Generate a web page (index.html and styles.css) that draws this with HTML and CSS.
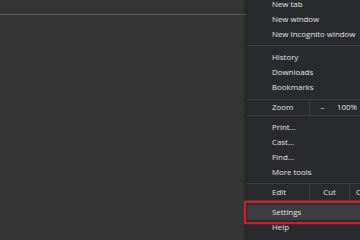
FILE: index.html
```html
<!DOCTYPE html>
<html>
<head>
<meta charset="utf-8">
<link rel="stylesheet" href="styles.css">
</head>
<body>
<div class="page">
  <div class="toolbar-line"></div>
  <div class="menu">
    <div class="item">New tab</div>
    <div class="item">New window</div>
    <div class="item">New Incognito window</div>
    <div class="sep sep-a"></div>
    <div class="item">History</div>
    <div class="item">Downloads</div>
    <div class="item">Bookmarks</div>
    <div class="sep sep-b"></div>
    <div class="row">
      <div class="row-label">Zoom</div>
      <div class="cell cell-minus">–</div>
      <div class="cell cell-pct">100%</div>
    </div>
    <div class="sep sep-c"></div>
    <div class="item">Print...</div>
    <div class="item">Cast...</div>
    <div class="item">Find...</div>
    <div class="item">More tools</div>
    <div class="sep sep-d"></div>
    <div class="row row-edit">
      <div class="row-label">Edit</div>
      <div class="cell cell-cut">Cut</div>
      <div class="cell cell-copy">Copy</div>
    </div>
    <div class="sep sep-e"></div>
    <div class="item item-settings">Settings</div>
    <div class="item">Help</div>
  </div>
</div>
</body>
</html>
```

FILE: styles.css
```css
html, body {
  margin: 0;
  padding: 0;
  width: 360px;
  height: 240px;
  overflow: hidden;
  background: #353535;
}

.page {
  position: relative;
  width: 360px;
  height: 240px;
  padding-top: 14px;
  box-sizing: border-box;
  overflow: hidden;
  font-family: "Open Sans", "Noto Sans", sans-serif;
  font-size: 7.9px;
  color: #e4e5e7;
}

.toolbar-line {
  height: 1px;
  width: 247px;
  background: #5f5f5f;
}

.menu {
  position: absolute;
  top: -4px;
  left: 247px;
  width: 140px;
  height: 260px;
  padding-top: 1px;
  background: #292a2d;
  box-shadow: -2px 0 3px rgba(0, 0, 0, 0.35);
  display: flex;
  flex-direction: column;
}

.item {
  height: 15px;
  line-height: 15px;
  padding-left: 25px;
  white-space: nowrap;
  flex-shrink: 0;
}

.sep {
  height: 1px;
  background: #3d3e42;
  flex-shrink: 0;
}
.sep-a { margin: 3px 0 4px; }
.sep-b { margin: 4px 0 0; }
.sep-c { margin: 0 0 4px; }
.sep-d { margin: 3px 0 0; }
.sep-e { margin: 0 0 4px; }

.row {
  display: flex;
  height: 15px;
  line-height: 15px;
  white-space: nowrap;
  flex-shrink: 0;
}
.row-edit { height: 16px; line-height: 16px; }

.row-label {
  width: 37px;
  padding-left: 25px;
  flex-shrink: 0;
}

.cell {
  border-left: 1px solid #3d3e42;
  flex-shrink: 0;
}
.cell-minus {
  width: 25px;
  text-align: center;
}
.cell-pct {
  border-left: none;
  width: 40px;
  padding-left: 2px;
}
.cell-cut {
  width: 39px;
  text-align: center;
}
.cell-copy {
  width: 40px;
  padding-left: 6px;
}

.item-settings {
  position: relative;
  background: #3c3d40;
}
.item-settings::before {
  content: "";
  position: absolute;
  left: -3px;
  right: -10px;
  top: -4px;
  bottom: -4px;
  border: 2px solid #d0202b;
  border-radius: 1px;
  box-shadow: 0 0 2px rgba(208, 32, 43, 0.6);
}
```
